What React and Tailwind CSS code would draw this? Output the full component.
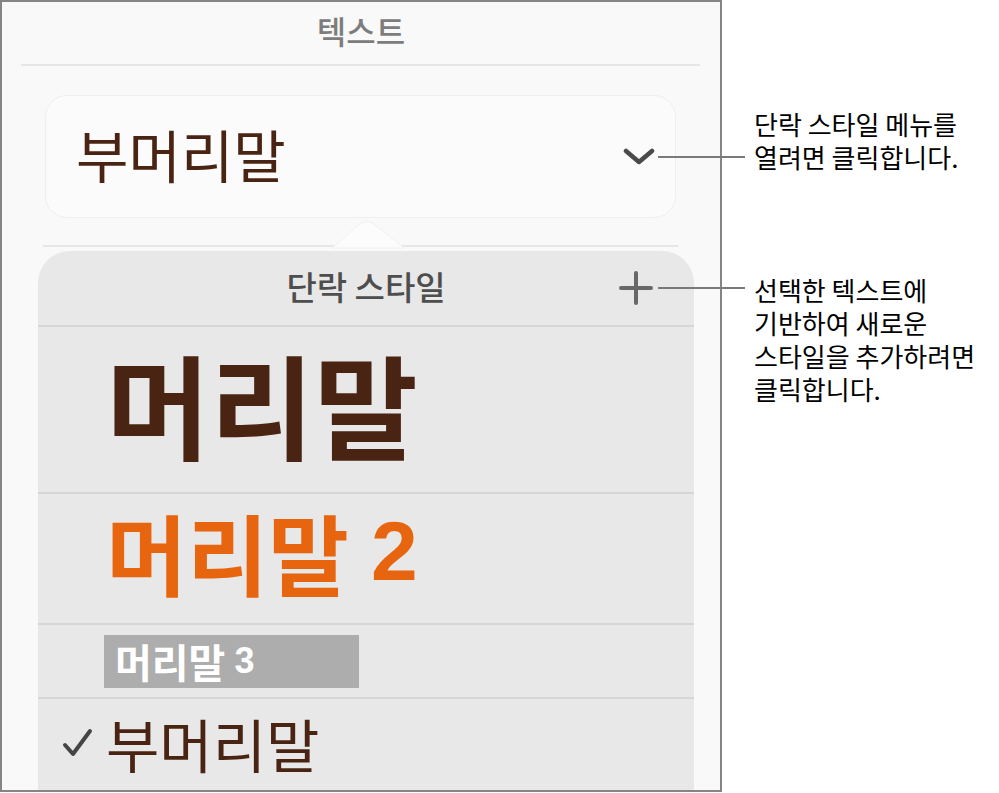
import React from 'react';

const KR = "font-['Noto_Sans_CJK_KR','Noto_Sans',sans-serif]";
const DIGIT = "font-['Liberation_Sans',Arial,sans-serif]";

function Chevron() {
  return (
    <svg width="32" height="20" viewBox="0 0 32 20" fill="none">
      <path d="M3 4 L16 15 L29 4" stroke="#4a4a4a" strokeWidth="4.5" strokeLinecap="round" strokeLinejoin="round" />
    </svg>
  );
}

function Plus() {
  return (
    <svg width="34" height="34" viewBox="0 0 34 34" fill="none">
      <path d="M17 2 V32 M2 17 H32" stroke="#686868" strokeWidth="4" strokeLinecap="round" />
    </svg>
  );
}

function Check() {
  return (
    <svg width="32" height="30" viewBox="0 0 32 30" fill="none">
      <path d="M3 17 L11 26 L28 3" stroke="#454545" strokeWidth="4" strokeLinecap="round" strokeLinejoin="round" />
    </svg>
  );
}

function Divider() {
  return <div className="h-[2px] bg-[#d6d6d6]" />;
}

export default function App() {
  return (
    <div className={`relative w-[999px] h-[793px] bg-white flex ${KR}`}>
      {/* inspector panel */}
      <div className="w-[722px] h-[792px] border-2 border-[#858585] bg-[#f9f9f9] overflow-hidden flex flex-col">
        <div className="h-[62px] flex items-center justify-center pb-[6px]">
          <span className="text-[32px] leading-none font-medium text-[#7d7d7d]">텍스트</span>
        </div>
        <div className="ml-[19px] mr-[20px] h-[2px] bg-[#e6e6e6]" />

        {/* style picker */}
        <div className="ml-[43px] mt-[29px] w-[631px] h-[123px] rounded-[22px] border border-[#efefef] bg-[#fbfbfb] flex items-center justify-between pl-[30px] pr-[20px]">
          <span className="text-[57px] leading-none text-[#4a2412] pb-[6px]">부머리말</span>
          <Chevron />
        </div>

        {/* popover separator + arrow */}
        <div className="relative ml-[41px] mt-[27px] w-[635px] h-[2px] bg-[#e6e6e6]">
          <svg className="absolute left-[289px] top-[-24px]" width="72" height="30" viewBox="0 0 72 30">
            <path d="M0 27 L28 3 Q35 -2 42 3 L72 27 Z" fill="#fcfcfc" stroke="#f1f1f1" strokeWidth="1" />
          </svg>
        </div>

        {/* paragraph styles popover */}
        <div className="ml-[36px] mt-[4px] w-[656px] flex-1 rounded-t-[32px] bg-[#e8e8e8] flex flex-col">
          <div className="relative h-[74px] flex items-center justify-center pb-[4px]">
            <span className="text-[33px] leading-none font-medium text-[#4e4e4e]">단락 스타일</span>
            <div className="absolute right-[41px] top-[20px]">
              <Plus />
            </div>
          </div>
          <Divider />
          <div className="h-[165px] flex items-center pl-[68px] pb-[15px]">
            <span className="text-[113px] leading-none font-bold text-[#4a2412]">머리말</span>
          </div>
          <Divider />
          <div className="h-[129px] flex items-center pl-[68px] pb-[16px]">
            <span className="text-[88px] leading-none font-bold text-[#e8650f]">머리말</span>
            <span className={`ml-[22px] text-[84px] leading-none font-bold text-[#e8650f] ${DIGIT}`}>2</span>
          </div>
          <Divider />
          <div className="h-[72px] flex items-center pl-[66px]">
            <div className="w-[255px] h-[53px] bg-[#adadad] flex items-center pl-[11px]">
              <span className="text-[40px] leading-none font-bold text-white">머리말</span>
              <span className={`ml-[9px] text-[36px] leading-none font-bold text-white ${DIGIT}`}>3</span>
            </div>
          </div>
          <Divider />
          <div className="flex-1 flex items-center pl-[24px] pb-[4px]">
            <Check />
            <span className="ml-[12px] text-[58px] leading-none text-[#4a2412]">부머리말</span>
          </div>
        </div>
      </div>

      {/* callouts */}
      <div className="flex flex-col pl-[32px] text-[26px] leading-[33px] text-black">
        <div className="mt-[107px]">
          <p>단락 스타일 메뉴를</p>
          <p>열려면 클릭합니다.</p>
        </div>
        <div className="mt-[100px]">
          <p>선택한 텍스트에</p>
          <p>기반하여 새로운</p>
          <p>스타일을 추가하려면</p>
          <p>클릭합니다.</p>
        </div>
      </div>

      <div className="absolute left-[658px] top-[156px] w-[87px] h-[2px] bg-[#7a7a7a]" />
      <div className="absolute left-[658px] top-[287px] w-[87px] h-[2px] bg-[#7a7a7a]" />
    </div>
  );
}
